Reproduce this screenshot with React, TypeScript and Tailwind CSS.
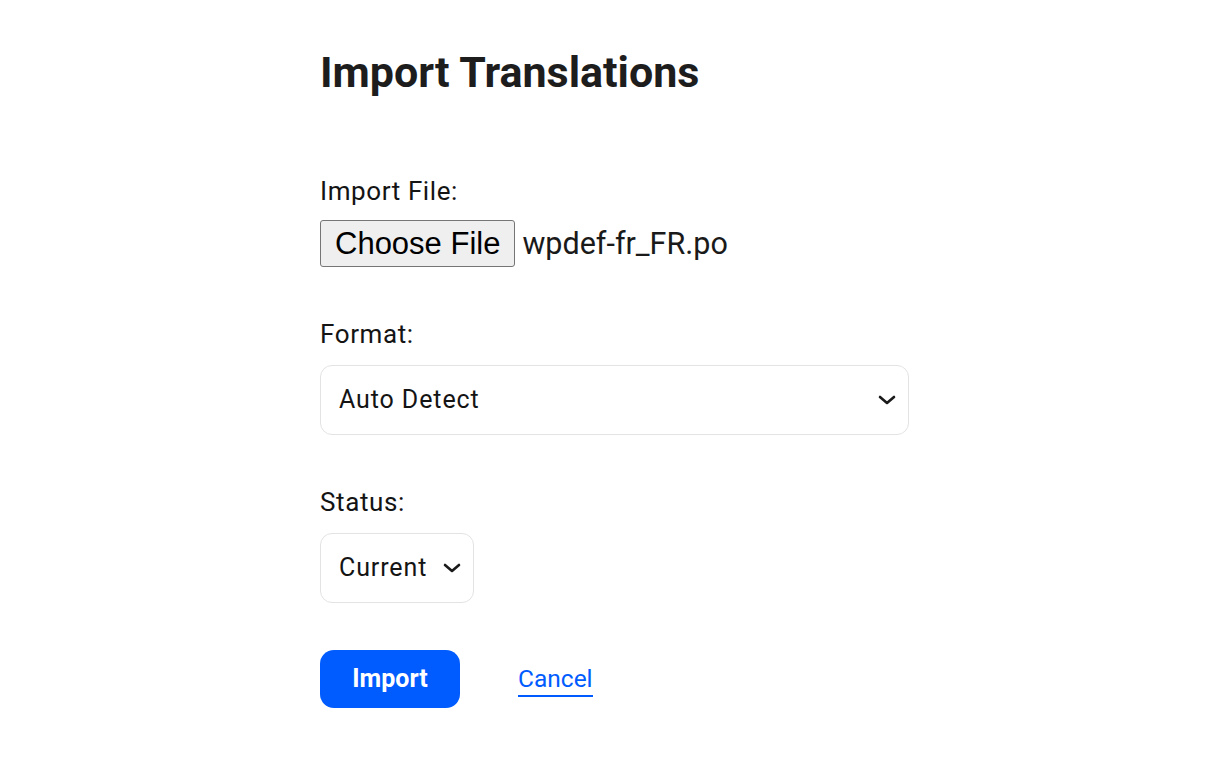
import { useState } from "react";

const Chevron = () => (
  <svg width="18" height="10" viewBox="0 0 18 10" fill="none" className="shrink-0">
    <path d="M2 2l7 6 7-6" stroke="#1a1a1a" strokeWidth="2.6" strokeLinecap="round" strokeLinejoin="round" />
  </svg>
);

const Select = ({ value, wide }: { value: string; wide?: boolean }) => (
  <div
    className={`flex h-[70px] items-center justify-between rounded-[12px] border border-[#e3e3e3] bg-white pl-[18px] pr-[12px] ${
      wide ? "w-[589px]" : "w-[154px]"
    }`}
  >
    <span className="text-[25px] font-normal tracking-[0.9px] text-[#141414]">{value}</span>
    <Chevron />
  </div>
);

export default function App() {
  const [status] = useState("Current");

  return (
    <div className="min-h-screen bg-white font-['Roboto',sans-serif] text-[#141414]">
      <div className="ml-[320px] pt-[42px]">
        <h1 className="text-[43px] font-bold leading-[60px] text-[#1d1d1d]">Import Translations</h1>

        <div className="mt-[72px]">
          <label className="block text-[26px] font-normal leading-[34px] tracking-[0.6px]">Import File:</label>
          <div className="mt-[12px] flex items-center gap-[7px]">
            <button className="h-[47px] rounded-[3px] border border-[#767676] bg-[#efefef] px-[14px] font-['Liberation_Sans',Arial,sans-serif] text-[31px] leading-none text-black">
              Choose File
            </button>
            <span className="text-[30.5px] text-[#1a1a1a]">wpdef-fr_FR.po</span>
          </div>
        </div>

        <div className="mt-[50px]">
          <label className="block text-[26px] font-normal leading-[34px] tracking-[0.6px]">Format:</label>
          <div className="mt-[14px]">
            <Select value="Auto Detect" wide />
          </div>
        </div>

        <div className="mt-[50px]">
          <label className="block text-[26px] font-normal leading-[34px] tracking-[0.6px]">Status:</label>
          <div className="mt-[14px]">
            <Select value={status} />
          </div>
        </div>

        <div className="mt-[47px] flex items-center gap-[58px]">
          <button className="h-[58px] w-[140px] rounded-[14px] bg-[#005cff] text-[25px] font-bold text-white">
            Import
          </button>
          <a href="#" className="border-b-2 border-[#005cff] text-[24.5px] leading-[33px] text-[#005cff]">
            Cancel
          </a>
        </div>
      </div>
    </div>
  );
}
